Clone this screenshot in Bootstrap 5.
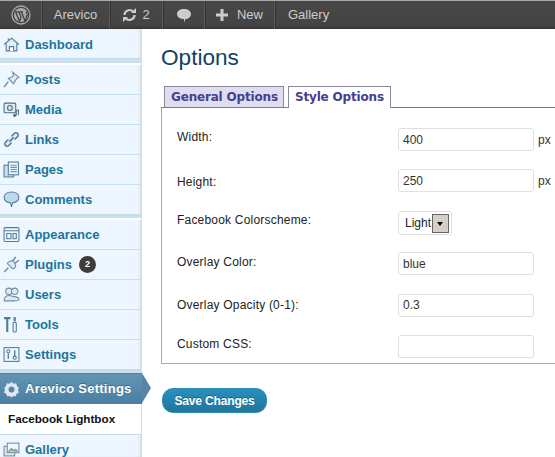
<!DOCTYPE html>
<html lang="en">
<head>
  <meta charset="UTF-8">
  <meta name="viewport" content="width=device-width, initial-scale=1.0">
  <title>Options</title>
  <link href="https://cdn.jsdelivr.net/npm/bootstrap@5.3.0/dist/css/bootstrap.min.css" rel="stylesheet">
  <style>
    html, body { height: 457px; overflow: hidden; }
    body { font-family: "Liberation Sans", Arial, sans-serif; background: #fff; color: #333; font-size: 12px; }
    .adminbar { height: 29px; background: linear-gradient(#484848, #444 85%, #363636); border-top: 1px solid #a9a9a9; color: #ccc; font-size: 13px; }
    .bar-item { height: 28px; border-right: 1px solid #5a5a5a; box-shadow: 1px 0 0 #333; gap: 5px; }
    .bar-logo { width: 42px; }
    .bar-site { width: 68px; }
    .bar-upd { width: 53px; }
    .bar-com { width: 42px; }
    .bar-new { width: 70px; }
    .bar-gal { padding-left: 13px; }
    .page-wrap { height: 428px; overflow: hidden; }
    .side-menu { width: 142px; flex: none; background: #eef7ff; box-shadow: inset -3px 0 4px -2px #c5ccd3; font-weight: 700; font-size: 13px; color: #21759b; }
    .side-item { height: 30px; padding-left: 3px; gap: 5px; border-bottom: 1px solid #c5e0f5; margin-right: 1px; }
    .side-item.first-one { height: 29px; padding-top: 2px; border-bottom: 0; }
    .side-item svg { flex: none; width: 17px; height: 17px; }
    .side-sep { height: 7px; margin-right: 1px; background: #cfe0ea; border-top: 1px solid #bcdaf0; border-bottom: 2px solid #fff; }
    .side-sep.mid-one { height: 5px; }
    .side-sep.low-one { height: 3px; border-bottom: 0; }
    .side-active { height: 31px; width: 142px; padding-left: 3px; gap: 5px; color: #fff; background: linear-gradient(#6394b3, #4a7fa2); position: relative; text-shadow: 0 -1px 0 #3b6a89; border-top: 1px solid #4f83a5; letter-spacing: .25px; }
    .side-active::after { content: ""; position: absolute; left: 142px; top: -1px; border-left: 9px solid #5585a7; border-top: 15px solid transparent; border-bottom: 15px solid transparent; }
    .side-active svg { flex: none; width: 17px; height: 17px; }
    .side-sub { height: 31px; background: #fff; color: #111; font-size: 11.7px; padding-left: 8px; border-bottom: 1px solid #c5e0f5; margin-right: 1px; }
    .plugin-count { width: 17px; height: 17px; border-radius: 50%; background: #3d3d3d; color: #fff; font-size: 9px; margin-left: 2px; }
    .main-area { flex: 1; min-width: 0; padding-left: 19px; position: relative; z-index: 0; }
    .page-title { font-size: 22.6px; font-weight: 400; color: #12435f; margin: 16px 0 0; line-height: 26px; }
    .tab-row { margin-top: 15px; padding-left: 3px; height: 22px; gap: 4px; border-bottom: 1px solid #7d7a94; }
    .tab-link { height: 21px; border: 1px solid #8a879f; border-bottom: 0; font-family: "DejaVu Sans", sans-serif; font-weight: 700; font-size: 12px; line-height: 21px; color: #45408f; padding: 0 6px; background: #dfddee; white-space: nowrap; letter-spacing: -.18px; }
    .tab-link.tab-first { width: 120px; }
    .tab-link.tab-on { background: #fff; height: 22px; width: 103px; position: relative; }
    .opt-panel { border-left: 1px solid #aaa; border-bottom: 1px solid #aaa; height: 256px; padding: 20px 0 0 15px; }
    .opt-row { height: 41.4px; }
    .opt-label { width: 221px; flex: none; color: #222; font-size: 12px; letter-spacing: .2px; }
    .label-nudge { padding-top: 1px; }
    .label-nudge-more { padding-top: 2px; }
    .opt-input { width: 136px; height: 23px; border: 1px solid #dfdfdf; border-radius: 3px; padding: 0 4px; font-size: 12px; color: #333; background: #fff; font-family: inherit; outline: 0; }
    .unit-txt { margin-left: 4px; padding-top: 3px; }
    .color-select { width: 54px; height: 24px; border: 1px solid #dfdfdf; border-radius: 3px; padding-left: 6px; position: relative; font-size: 12px; color: #222; }
    .select-arrow { position: absolute; left: 33px; top: 2px; width: 17px; height: 19px; background: #d4d0c8; border: 1px solid #666; }
    .select-arrow::after { content: ""; position: absolute; left: 4px; top: 7px; border-top: 4px solid #000; border-left: 3.5px solid transparent; border-right: 3.5px solid transparent; }
    .save-btn { margin: 24px 0 0 1px; width: 105px; height: 25px; padding: 0; border-radius: 11px; border: 1px solid #298cba; background: linear-gradient(#2a8fbd, #21759b); color: #fff; font-weight: 700; font-size: 12px; letter-spacing: -.15px; text-shadow: 0 -1px 0 rgba(0,0,0,.3); display: block; }
    .save-btn:hover { background: #21759b; color: #fff; }
  </style>
</head>
<body>
  <div class="adminbar d-flex align-items-center">
    <div class="bar-item bar-logo d-flex align-items-center justify-content-center">
      <svg width="20" height="20" viewBox="0 0 20 20"><circle cx="10" cy="10" r="9" fill="none" stroke="#aaa" stroke-width="1.3"/><circle cx="10" cy="10" r="7" fill="#aaa"/><path d="M4.500 6.500 8.500 16.500 10 12 8 6.800M8 6.800H5M8 6.800h4M10.500 6.800l3.500 9.500 2-6c.4-1.500-.2-3-1-3.600" fill="none" stroke="#444" stroke-width="1.300"/></svg>
    </div>
    <div class="bar-item bar-site d-flex align-items-center justify-content-center">Arevico</div>
    <div class="bar-item bar-upd d-flex align-items-center justify-content-center">
      <svg width="15" height="14" viewBox="0 0 15 14"><path d="M2.500 7a5 5 0 0 1 8.600-3.400M12.500 7a5 5 0 0 1-8.600 3.400" fill="none" stroke="#ccc" stroke-width="2.200"/><path d="M9 5h5V0zM6 9H1v5z" fill="#ccc"/></svg>
      <span>2</span>
    </div>
    <div class="bar-item bar-com d-flex align-items-center justify-content-center">
      <svg width="16" height="15" viewBox="0 0 16 15"><path d="M8 1c4 0 7 2 7 5s-3 5-5.500 5L8 14.500V11C4 11 1 9 1 6s3-5 7-5z" fill="#ccc"/></svg>
    </div>
    <div class="bar-item bar-new d-flex align-items-center justify-content-center">
      <svg width="12" height="12" viewBox="0 0 12 12"><path d="M4.500 0h3v4.500H12v3H7.500V12h-3V7.500H0v-3h4.500z" fill="#ccc"/></svg>
      <span class="ms-1">New</span>
    </div>
    <div class="bar-gal">Gallery</div>
  </div>

  <div class="page-wrap d-flex">
    <div class="side-menu">
      <div class="side-item first-one d-flex align-items-center">
        <svg viewBox="0 0 16 16"><path d="M1 8 8 2l7 6M3 7v7h10V7" fill="#dfeaf2" stroke="#4f7d9a"/><path d="M6 14v-4h4v4M5 2v2" fill="#fff" stroke="#4f7d9a"/></svg>Dashboard
      </div>
      <div class="side-sep"></div>
      <div class="side-item d-flex align-items-center">
        <svg viewBox="0 0 16 16"><path d="M9 1l6 5-2 1-2 3-1 2-5-5 3-1 2-2z" fill="#dfeaf2" stroke="#6f8fa5"/><path d="M5 10l-4 5" stroke="#6f8fa5" stroke-width="1.400"/></svg>Posts
      </div>
      <div class="side-item d-flex align-items-center">
        <svg viewBox="0 0 16 16"><rect x="1" y="2" width="11" height="9" rx="1" fill="#dfeaf2" stroke="#4f6f85"/><circle cx="6.500" cy="6.500" r="2.200" fill="none" stroke="#4f6f85"/><circle cx="11" cy="13.500" r="1.500" fill="#4f6f85"/><path d="M12.500 13.500V9l2-.5v5" fill="none" stroke="#4f6f85"/></svg>Media
      </div>
      <div class="side-item d-flex align-items-center">
        <svg viewBox="0 0 16 16"><path d="M3 13 13 3" stroke="#dfeaf2" stroke-width="5" stroke-linecap="round"/><path d="M5 8 2 11c-1 2 1 4 3 3l3-3M11 8l3-3c1-2-1-4-3-3L8 5M6 10l4-4" fill="none" stroke="#4f7d9a" stroke-width="1.400"/></svg>Links
      </div>
      <div class="side-item d-flex align-items-center">
        <svg viewBox="0 0 16 16"><rect x="1" y="4" width="9" height="11" fill="#cfe2ef" stroke="#4f7d9a"/><rect x="5" y="1" width="9.500" height="12" fill="#eef7ff" stroke="#4f7d9a"/><path d="M7 4h6M7 6h6M7 8h6M7 10h6" stroke="#6f93aa"/></svg>Pages
      </div>
      <div class="side-item d-flex align-items-center">
        <svg viewBox="0 0 16 16"><path d="M8 1c4 0 7 2 7 5s-3 5-6 5l-1 4-1-4C4 11 1 9 1 6s3-5 7-5z" fill="#bcd8ea" stroke="#4f7d9a"/></svg>Comments
      </div>
      <div class="side-sep mid-one"></div>
      <div class="side-item d-flex align-items-center">
        <svg viewBox="0 0 16 16"><rect x="1" y="1.500" width="14" height="13" rx="1" fill="#eef7ff" stroke="#4f7d9a"/><path d="M1 4.500h14M3.500 7h4v5h-4zM9.500 7h3v5h-3z" fill="none" stroke="#4f7d9a"/></svg>Appearance
      </div>
      <div class="side-item d-flex align-items-center">
        <svg viewBox="0 0 16 16"><path d="M4 7l5 5c2 0 3-2 3-3l-2-4C8 4 5 5 4 7z" fill="#dfeaf2" stroke="#6f8fa5"/><path d="M9 5l3-4M11 7l4-3M5 11l-4 4" fill="none" stroke="#6f8fa5" stroke-width="1.400"/></svg>Plugins
        <span class="plugin-count d-flex align-items-center justify-content-center">2</span>
      </div>
      <div class="side-item d-flex align-items-center">
        <svg viewBox="0 0 16 16"><circle cx="5.500" cy="5" r="3" fill="#dfeaf2" stroke="#6f8fa5"/><circle cx="11" cy="5" r="3" fill="#dfeaf2" stroke="#6f8fa5"/><path d="M1 14c0-4 3-5 5-5s3 1 4 1 5 0 5 3c0 1-2 1-5 1H1z" fill="#dfeaf2" stroke="#6f8fa5"/></svg>Users
      </div>
      <div class="side-item d-flex align-items-center">
        <svg viewBox="0 0 16 16"><path d="M1 2h6M4 2v13" fill="none" stroke="#4f7d9a" stroke-width="2"/><path d="M11 1v4" stroke="#4f7d9a" stroke-width="2"/><rect x="9.500" y="6" width="3" height="9" rx="1" fill="#eef7ff" stroke="#4f7d9a"/></svg>Tools
      </div>
      <div class="side-item d-flex align-items-center">
        <svg viewBox="0 0 16 16"><rect x="1" y="1.500" width="14" height="13" fill="#eef7ff" stroke="#4f7d9a"/><circle cx="5" cy="5" r="1.500" fill="none" stroke="#4f7d9a"/><path d="M5 7v5M11 4v6" stroke="#4f7d9a" stroke-width="1.300"/><circle cx="11" cy="11" r="1.500" fill="none" stroke="#4f7d9a"/></svg>Settings
      </div>
      <div class="side-sep low-one"></div>
      <div class="side-active d-flex align-items-center">
        <svg viewBox="0 0 16 16"><path d="M8 1l2 1.500 2.500-.3.6 2.500 1.900 1.800L14 8.500l1 2.300-2.200 1.200-.8 2.300-2.400-.2L8 15.500l-1.800-1.400-2.400.2-.8-2.300L.8 10.800 2 8.500 1 6.500l1.900-1.800.6-2.500L6 2.500z" fill="#dfe8f2"/><circle cx="8" cy="8" r="2.800" fill="#5585a7"/></svg>Arevico Settings
      </div>
      <div class="side-sub d-flex align-items-center">Facebook Lightbox</div>
      <div class="side-item d-flex align-items-center">
        <svg viewBox="0 0 16 16"><rect x="1" y="5" width="10" height="9" fill="#dfeaf2" stroke="#6f8fa5"/><rect x="4" y="2" width="11" height="9" fill="#eef7ff" stroke="#6f8fa5"/><path d="M5 10l3-3 2 2 2-1 2 2" fill="#c9b77a" stroke="#6f8fa5"/></svg>Gallery
      </div>
    </div>

    <div class="main-area">
      <h1 class="page-title">Options</h1>
      <div class="tab-row d-flex">
        <div class="tab-link tab-first">General Options</div>
        <div class="tab-link tab-on">Style Options</div>
      </div>
      <form>
        <div class="opt-panel">
          <div class="opt-row d-flex align-items-start">
            <div class="opt-label">Width:</div>
            <input class="opt-input" type="text" value="400"><span class="unit-txt">px</span>
          </div>
          <div class="opt-row d-flex align-items-start">
            <div class="opt-label pt-1">Height:</div>
            <input class="opt-input" type="text" value="250"><span class="unit-txt">px</span>
          </div>
          <div class="opt-row d-flex align-items-start">
            <div class="opt-label">Facebook Colorscheme:</div>
            <div class="color-select d-flex align-items-center">Light<span class="select-arrow"></span></div>
          </div>
          <div class="opt-row d-flex align-items-start">
            <div class="opt-label label-nudge">Overlay Color:</div>
            <input class="opt-input" type="text" value="blue">
          </div>
          <div class="opt-row d-flex align-items-start">
            <div class="opt-label label-nudge-more">Overlay Opacity (0-1):</div>
            <input class="opt-input" type="text" value="0.3">
          </div>
          <div class="opt-row d-flex align-items-start">
            <div class="opt-label">Custom CSS:</div>
            <input class="opt-input" type="text" value="">
          </div>
        </div>
        <button type="button" class="btn save-btn">Save Changes</button>
      </form>
    </div>
  </div>
  <script src="https://cdn.jsdelivr.net/npm/bootstrap@5.3.0/dist/js/bootstrap.bundle.min.js"></script>
</body>
</html>
